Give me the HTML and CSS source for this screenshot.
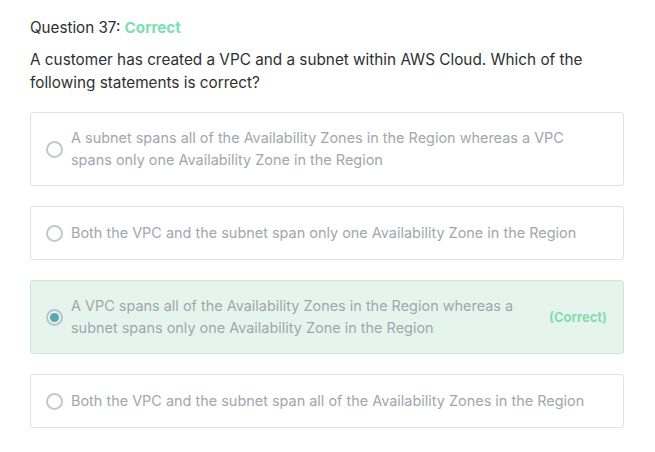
FILE: index.html
```html
<!DOCTYPE html>
<html>
<head>
<meta charset="utf-8">
<link rel="stylesheet" href="styles.css">
</head>
<body>
<div class="page">
  <div class="qtitle">Question 37: <span class="status">Correct</span></div>
  <p class="qtext">A customer has created a VPC and a subnet within AWS Cloud. Which of the following statements is correct?</p>
  <div class="options">
    <div class="option">
      <span class="radio"></span>
      <span class="otext">A subnet spans all of the Availability Zones in the Region whereas a VPC spans only one Availability Zone in the Region</span>
    </div>
    <div class="option">
      <span class="radio"></span>
      <span class="otext">Both the VPC and the subnet span only one Availability Zone in the Region</span>
    </div>
    <div class="option correct">
      <span class="radio checked"></span>
      <span class="otext">A VPC spans all of the Availability Zones in the Region whereas a subnet spans only one Availability Zone in the Region</span>
      <span class="tag">(Correct)</span>
    </div>
    <div class="option">
      <span class="radio"></span>
      <span class="otext">Both the VPC and the subnet span all of the Availability Zones in the Region</span>
    </div>
  </div>
</div>
</body>
</html>
```
FILE: styles.css
```css
html, body {
  margin: 0;
  padding: 0;
  background: #ffffff;
}
body {
  font-family: Inter, "Noto Sans", sans-serif;
  color: #2d2f31;
}
.page {
  padding: 17px 31px 0 30px;
}
.qtitle {
  font-size: 15.2px;
  line-height: 22px;
  color: #2d2f31;
}
.status {
  color: #7ae0b0;
  font-weight: 700;
}
.qtext {
  margin: 9px 0 0;
  font-size: 15.3px;
  line-height: 23px;
  color: #2d2f31;
}
.options {
  margin-top: 18px;
  display: flex;
  flex-direction: column;
  gap: 20px;
}
.option {
  display: flex;
  align-items: center;
  min-height: 24px;
  border: 1px solid #e1e2e4;
  border-radius: 3px;
  padding: 14px 16px 14px 15px;
  background: #fff;
}
.option.correct {
  background: #e5f5ed;
  border-color: #d3e6dc;
}
.radio {
  flex: none;
  width: 13px;
  height: 13px;
  border: 2px solid #c4c7ce;
  border-radius: 50%;
  margin-right: 8px;
  box-sizing: content-box;
  display: flex;
  align-items: center;
  justify-content: center;
}
.radio.checked {
  border-color: #b9c6cb;
}
.radio.checked::after {
  content: "";
  width: 9px;
  height: 9px;
  border-radius: 50%;
  background: #5aa6b2;
}
.otext {
  flex: 1;
  font-size: 14.45px;
  line-height: 22px;
  color: #a3a6ad;
}
.tag {
  flex: none;
  margin-left: 30px;
  font-size: 13px;
  font-weight: 700;
  color: #86dbb1;
}
```
